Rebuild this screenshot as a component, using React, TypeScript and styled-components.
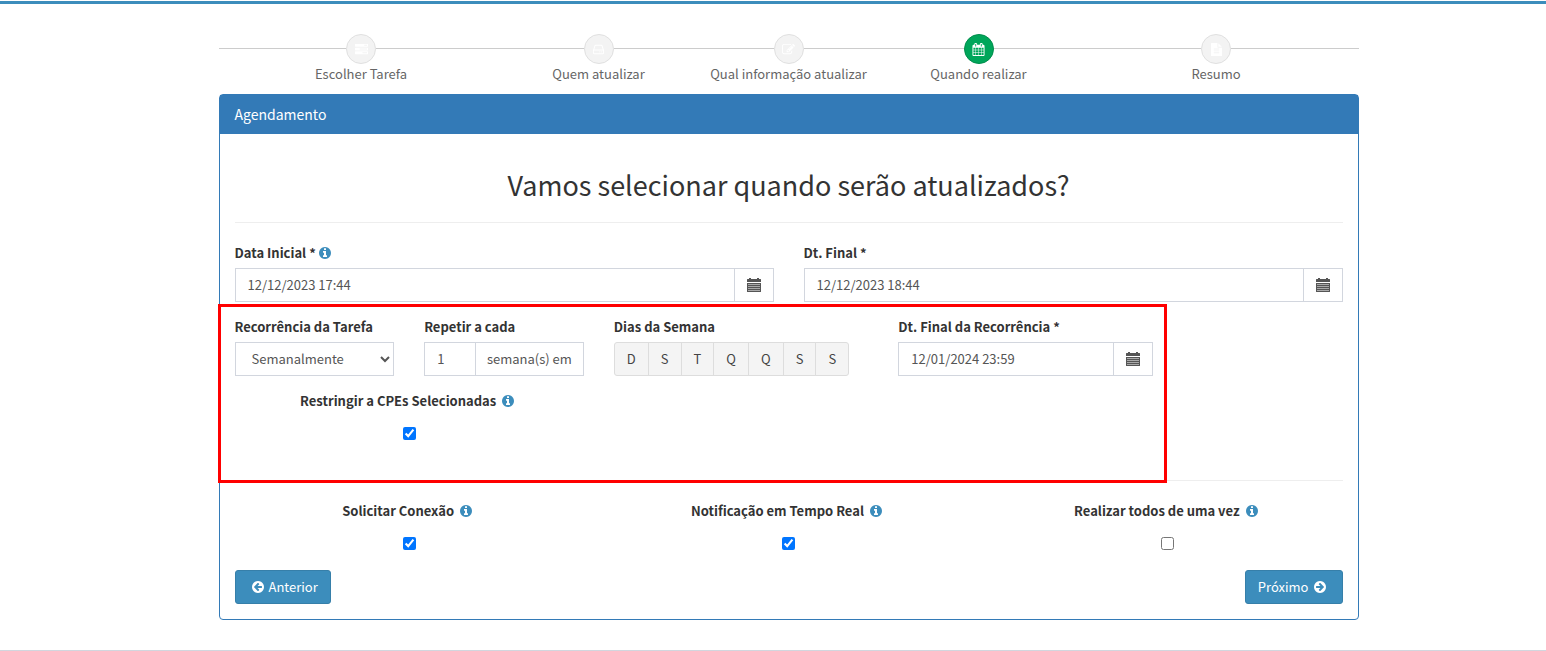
import React, { useState } from "react";
import styled, { createGlobalStyle, css } from "styled-components";

const GlobalStyle = createGlobalStyle`
  *, *::before, *::after { box-sizing: border-box; }
  body {
    margin: 0;
    background: #fff;
    color: #333;
    font-family: "Source Sans Pro", "Noto Sans CJK SC", "Noto Sans", sans-serif;
    font-size: 13px;
    line-height: 20px;
  }
  input, select, button { font: inherit; }
`;

/* ---------- icons ---------- */

const CIRCLE =
  "M1664 896q0 209-103 385.500t-279.500 279.500-385.500 103-385.500-103-279.500-279.500-103-385.500 103-385.500 279.500-279.500 385.500-103 385.500 103 279.500 279.500 103 385.500z";
const BAR =
  "v256q0 26-19 45t-45 19h-1664q-26 0-45-19t-19-45v-256q0-26 19-45t45-19h1664q26 0 45 19t19 45z";
const TEXT_LINE =
  "v-64q0-14-9-23t-23-9h-704q-14 0-23 9t-9 23v64q0 14 9 23t23 9h704q14 0 23-9t9-23z";

const paths = {
  tasks: `M1024 1408h640v-128h-640v128zM640 896h1024v-128h-1024v128zM1280 384h384v-128h-384v128zM1792 1216${BAR}M1792 704${BAR}M1792 192${BAR}`,
  drive:
    "M1168 1216q0 33-23.500 56.500t-56.500 23.500-56.500-23.500-23.500-56.500 23.500-56.500 56.500-23.500 56.500 23.500 23.500 56.500zm256 0q0 33-23.500 56.500t-56.500 23.500-56.500-23.500-23.500-56.500 23.500-56.500 56.500-23.500 56.500 23.500 23.500 56.500zm112 160v-320q0-13-9.500-22.500t-22.500-9.500h-1216q-13 0-22.500 9.500t-9.500 22.500v320q0 13 9.500 22.500t22.500 9.500h1216q13 0 22.500-9.500t9.500-22.500zm-1230-480h1180l-157-482q-4-13-16-21.500t-26-8.500h-782q-14 0-26 8.500t-16 21.500zm1358 160v320q0 66-47 113t-113 47h-1216q-66 0-113-47t-47-113v-320q0-25 16-75l197-606q17-53 63-86t101-33h782q55 0 101 33t63 86l197 606q16 50 16 75z",
  edit: "M888 1184l116-116-152-152-116 116v56h96v96h56zm440-720q-16-16-33 1l-350 350q-17 17-1 33t33-1l350-350q17-17 1-33zm80 594v190q0 119-84.500 203.500t-203.500 84.500h-832q-119 0-203.500-84.500t-84.500-203.500v-832q0-119 84.500-203.500t203.500-84.500h832q63 0 117 25 15 7 18 23 3 17-9 29l-49 49q-14 14-32 8-23-6-45-6h-832q-66 0-113 47t-47 113v832q0 66 47 113t113 47h832q66 0 113-47t47-113v-126q0-13 9-22l64-64q15-15 35-7t20 29zm-96-738l288 288-672 672h-288v-288zm444 132l-92 92-288-288 92-92q28-28 68-28t68 28l152 152q28 28 28 68t-28 68z",
  calendar:
    "M192 1664h288v-288h-288v288zm352 0h320v-288h-320v288zm-352-352h288v-320h-288v320zm352 0h320v-320h-320v320zm-352-384h288v-288h-288v288zm736 736h320v-288h-320v288zm-384-736h320v-288h-320v288zm768 736h288v-288h-288v288zm-384-352h320v-320h-320v320zm-352-864v-288q0-13-9.500-22.500t-22.500-9.500h-64q-13 0-22.500 9.500t-9.500 22.500v288q0 13 9.500 22.500t22.500 9.500h64q13 0 22.500-9.500t9.500-22.500zm736 864h288v-320h-288v320zm-384-384h320v-288h-320v288zm384 0h288v-288h-288v288zm32-480v-288q0-13-9.500-22.500t-22.500-9.500h-64q-13 0-22.500 9.500t-9.500 22.500v288q0 13 9.500 22.500t22.500 9.500h64q13 0 22.500-9.500t9.500-22.500zm384-64v1280q0 52-38 90t-90 38h-1408q-52 0-90-38t-38-90v-1280q0-52 38-90t90-38h128v-96q0-66 47-113t113-47h64q66 0 113 47t47 113v96h384v-96q0-66 47-113t113-47h64q66 0 113 47t47 113v96h128q52 0 90 38t38 90z",
  file: `M1596 476q14 14 28 36h-472v-472q22 14 36 28zm-476 164h544v1056q0 40-28 68t-68 28h-1344q-40 0-68-28t-28-68v-1600q0-40 28-68t68-28h800v544q0 40 28 68t68 28zM1280 1376${TEXT_LINE}M1280 1120${TEXT_LINE}M1280 864${TEXT_LINE}`,
  info: `M1152 1376v-160q0-14-9-23t-23-9h-96v-512q0-14-9-23t-23-9h-320q-14 0-23 9t-9 23v160q0 14 9 23t23 9h96v320h-96q-14 0-23 9t-9 23v160q0 14 9 23t23 9h448q14 0 23-9t9-23zm-128-896v-160q0-14-9-23t-23-9h-192q-14 0-23 9t-9 23v160q0 14 9 23t23 9h192q14 0 23-9t9-23z${CIRCLE}`,
  arrow: `M1408 960v-128q0-26-19-45t-45-19h-502l189-189q19-19 19-45t-19-45l-91-91q-18-18-45-18t-45 18l-362 362-91 91q-18 18-18 45t18 45l91 91 362 362q18 18 45 18t45-18l91-91q18-18 18-45t-18-45l-189-189h502q26 0 45-19t19-45z${CIRCLE}`,
};

type IconName = keyof typeof paths;

const Svg = styled.svg`
  display: block;
  flex: none;
  fill: currentColor;
  fill-rule: evenodd;
`;

const Icon = ({ name, size = 14, flip = false }: { name: IconName; size?: number; flip?: boolean }) => (
  <Svg width={size} height={size} viewBox="0 0 1792 1792" aria-hidden="true">
    <path d={paths[name]} transform={flip ? "matrix(-1 0 0 1 1792 0)" : undefined} />
  </Svg>
);

const gridHoles = [6, 8, 10, 12]
  .flatMap((y) => [1, 3, 5, 7, 9, 11].map((x) => `M${x + 0.5} ${y}h1v1h-1z`))
  .join("");

const DateIcon = () => (
  <Svg width={14} height={14} viewBox="0 0 14 14" aria-hidden="true">
    <path d={`M0 4V1.500Q0 1 .5 1H2V0H4V1H10V0H12V1H13.500Q14 1 14 1.500V4zM0 5H14V13.500Q14 14 13.500 14H.5Q0 14 0 13.500z${gridHoles}`} />
  </Svg>
);

/* ---------- page ---------- */

const TopBar = styled.header`
  margin-top: 1px;
  border-top: 3px solid #3c8dbc;
`;

const Main = styled.main`
  padding: 30px 0 30px 31px;
`;

const Container = styled.div`
  max-width: 1140px;
  margin: 0 auto;
`;

const Footer = styled.footer`
  border-top: 1px solid #d2d6de;
`;

/* ---------- steps ---------- */

const Steps = styled.ol`
  display: grid;
  grid-template-columns: 3fr 2fr 2fr 2fr 3fr;
  margin: 0;
  padding: 0 0 10px;
  list-style: none;
`;

const Step = styled.li`
  display: flex;
  flex-direction: column;
  align-items: center;
  color: #666;
`;

const StepTrack = styled.div`
  display: flex;
  align-items: center;
  align-self: stretch;

  &::before, &::after {
    content: "";
    flex: 1;
    height: 1px;
    margin-bottom: 1px;
    background: #ccc;
  }
`;

const StepButton = styled.button<{ $active?: boolean }>`
  display: flex;
  align-items: center;
  justify-content: center;
  width: 30px;
  height: 30px;
  padding: 0;
  border: 1px solid ${(p) => (p.$active ? "#008d4c" : "#e0e0e0")};
  border-radius: 50%;
  background: ${(p) => (p.$active ? "#00a65a" : "#f3f3f3")};
  color: #fff;
`;

/* ---------- panel ---------- */

const Panel = styled.section`
  border: 1px solid #337ab7;
  border-radius: 4px;
  background: #fff;
`;

const PanelTitle = styled.h1`
  margin: 0;
  padding: 9px 15px 10px;
  background: #337ab7;
  color: #fff;
  font-size: 14px;
  font-weight: 400;
  line-height: 20px;
`;

const PanelBody = styled.form`
  padding: 15px;
`;

const Heading = styled.h2`
  margin: 19px 0 21px;
  font-size: 27px;
  font-weight: 400;
  line-height: 33px;
  text-align: center;
`;

const Divider = styled.hr`
  height: 1px;
  margin: 20px 0;
  border: 0;
  background: #eee;
`;

const Row = styled.div`
  position: relative;
  display: grid;
  grid-template-columns: repeat(12, minmax(0, 1fr));
  gap: 15px 30px;
`;

const DatesRow = styled(Row)`
  margin-bottom: 15px;
`;

const Highlight = styled.div`
  position: absolute;
  inset: -13px 176px -33px -17px;
  border: 3px solid #f00;
  pointer-events: none;
`;

const RecurrenceRow = styled(Row)`
  margin-bottom: 30px;
`;

const Group = styled.div<{ $span: number; $center?: boolean }>`
  display: flex;
  flex-direction: column;
  gap: 5px;
  grid-column: span ${(p) => p.$span};
  ${(p) =>
    p.$center &&
    css`
      align-items: center;
    `}
`;

const LabelLine = styled.div`
  display: flex;
  align-items: center;
  gap: 2px;
  height: 20px;
  color: #3c8dbc;
`;

const CheckLabelLine = styled(LabelLine)`
  gap: 5px;
  padding-right: 3px;
`;

const Label = styled.label`
  color: #333;
  font-weight: 700;
  white-space: nowrap;
`;

const control = css`
  height: 34px;
  border: 1px solid #d2d6de;
  border-radius: 0;
  background: #fff;
  color: #555;
`;

const Input = styled.input`
  ${control}
  flex: 1;
  min-width: 0;
  padding: 5px 12px 7px;
`;

const Select = styled.select`
  ${control}
  width: 100%;
  padding: 5px 12px 7px;
`;

const InputGroup = styled.div`
  display: flex;
`;

const Addon = styled.span`
  ${control}
  display: flex;
  align-items: center;
  padding: 0 11px;
  border-left: 0;
  white-space: nowrap;
`;

const AddonButton = styled.button`
  ${control}
  display: flex;
  align-items: center;
  padding: 0 12px;
  border-left: 0;
`;

const DayGroup = styled.div`
  display: flex;
`;

const Day = styled.button`
  height: 34px;
  padding: 0 12px;
  border: 1px solid #ddd;
  background: #f4f4f4;
  color: #444;

  & + & { margin-left: -1px; }
  &:first-child { border-radius: 3px 0 0 3px; }
  &:last-child { border-radius: 0 3px 3px 0; }
`;

const CheckArea = styled.div`
  display: flex;
  align-items: center;
  height: 34px;
`;

const Checkbox = styled.input`
  width: 13px;
  height: 13px;
  margin: 0;
`;

const Actions = styled.div`
  display: flex;
  justify-content: space-between;
  margin-top: 10px;
`;

const NavButton = styled.button`
  display: flex;
  align-items: center;
  gap: 4px;
  height: 34px;
  padding: 0 12px;
  border: 1px solid #367fa9;
  border-radius: 3px;
  background: #3c8dbc;
  color: #fff;
`;

const PrevButton = styled(NavButton)`
  padding-left: 15px;
`;

const NextButton = styled(NavButton)`
  padding-right: 15px;
`;

/* ---------- composition ---------- */

const steps: { label: string; icon: IconName; active?: boolean }[] = [
  { label: "Escolher Tarefa", icon: "tasks" },
  { label: "Quem atualizar", icon: "drive" },
  { label: "Qual informação atualizar", icon: "edit" },
  { label: "Quando realizar", icon: "calendar", active: true },
  { label: "Resumo", icon: "file" },
];

const DateField = ({ id, label, value, span, info }: { id: string; label: string; value: string; span: number; info?: boolean }) => (
  <Group $span={span}>
    <LabelLine>
      <Label htmlFor={id}>{label}</Label>
      {info && <Icon name="info" />}
    </LabelLine>
    <InputGroup>
      <Input id={id} type="text" defaultValue={value} />
      <AddonButton type="button" aria-label={`Abrir calendário: ${label}`}>
        <DateIcon />
      </AddonButton>
    </InputGroup>
  </Group>
);

const CheckField = ({ id, label, initial }: { id: string; label: string; initial: boolean }) => {
  const [checked, setChecked] = useState(initial);
  return (
    <Group $span={4} $center>
      <CheckLabelLine>
        <Label htmlFor={id}>{label}</Label>
        <Icon name="info" />
      </CheckLabelLine>
      <CheckArea>
        <Checkbox id={id} type="checkbox" checked={checked} onChange={(e) => setChecked(e.target.checked)} />
      </CheckArea>
    </Group>
  );
};

export default function App() {
  return (
    <>
      <GlobalStyle />
      <TopBar />
      <Main>
        <Container>
          <Steps>
            {steps.map((s) => (
              <Step key={s.label}>
                <StepTrack>
                  <StepButton type="button" $active={s.active} aria-label={s.label}>
                    <Icon name={s.icon} size={13} />
                  </StepButton>
                </StepTrack>
                {s.label}
              </Step>
            ))}
          </Steps>
          <Panel>
            <PanelTitle>Agendamento</PanelTitle>
            <PanelBody onSubmit={(e) => e.preventDefault()}>
              <Heading>Vamos selecionar quando serão atualizados?</Heading>
              <Divider />
              <DatesRow>
                <DateField id="start" label="Data Inicial *" value="12/12/2023 17:44" span={6} info />
                <DateField id="end" label="Dt. Final *" value="12/12/2023 18:44" span={6} />
              </DatesRow>
              <RecurrenceRow>
                <Group $span={2}>
                  <LabelLine>
                    <Label htmlFor="recurrence">Recorrência da Tarefa</Label>
                  </LabelLine>
                  <Select id="recurrence" defaultValue="Semanalmente">
                    <option>Diariamente</option>
                    <option>Semanalmente</option>
                    <option>Mensalmente</option>
                  </Select>
                </Group>
                <Group $span={2}>
                  <LabelLine>
                    <Label htmlFor="repeat">Repetir a cada</Label>
                  </LabelLine>
                  <InputGroup>
                    <Input id="repeat" type="text" defaultValue="1" />
                    <Addon>semana(s) em</Addon>
                  </InputGroup>
                </Group>
                <Group $span={3}>
                  <LabelLine>
                    <Label as="span" id="days">Dias da Semana</Label>
                  </LabelLine>
                  <DayGroup role="group" aria-labelledby="days">
                    {["D", "S", "T", "Q", "Q", "S", "S"].map((d, i) => (
                      <Day key={i} type="button">{d}</Day>
                    ))}
                  </DayGroup>
                </Group>
                <DateField id="recurrence-end" label="Dt. Final da Recorrência *" value="12/01/2024 23:59" span={3} />
                <Group $span={2} />
                <CheckField id="restrict" label="Restringir a CPEs Selecionadas" initial />
                <Highlight />
              </RecurrenceRow>
              <Divider />
              <Row>
                <CheckField id="connect" label="Solicitar Conexão" initial />
                <CheckField id="notify" label="Notificação em Tempo Real" initial />
                <CheckField id="all" label="Realizar todos de uma vez" initial={false} />
              </Row>
              <Actions>
                <PrevButton type="button">
                  <Icon name="arrow" />
                  Anterior
                </PrevButton>
                <NextButton type="submit">
                  Próximo
                  <Icon name="arrow" flip />
                </NextButton>
              </Actions>
            </PanelBody>
          </Panel>
        </Container>
      </Main>
      <Footer />
    </>
  );
}
